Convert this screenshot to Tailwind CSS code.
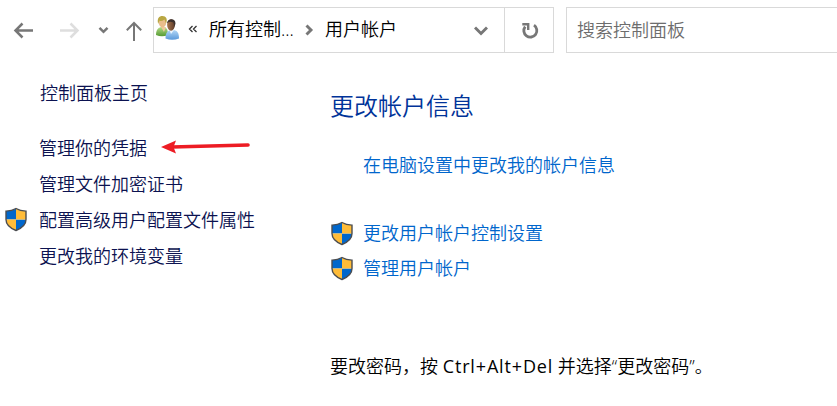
<!DOCTYPE html>
<html lang="zh-CN">
<head>
<meta charset="utf-8">
<title>用户帐户</title>
<script src="https://cdn.jsdelivr.net/npm/@tailwindcss/browser@4"></script>
</head>
<body class="bg-white w-[837px] h-[406px] overflow-hidden font-['Open_Sans','Noto_Sans_CJK_SC',sans-serif] text-[18px] font-[350] text-black whitespace-nowrap">
<svg class="absolute w-0 h-0">
  <clipPath id="sc"><path d="M12 1.500C9 3.400 5.500 4.100 2 4.100V12.500C2 18 6.500 21.300 12 23.500C17.500 21.300 22 18 22 12.500V4.100C18.500 4.100 15 3.400 12 1.500Z"/></clipPath>
  <symbol id="shield" viewBox="0 0 24 25">
    <g clip-path="url(#sc)"><path fill="#0067cc" d="M0 0H12V12.500H0ZM12 12.500H24V25H12Z"/><path fill="#ffbc38" d="M12 0H24V12.500H12ZM0 12.500H12V25H0Z"/></g>
    <path d="M12 1.500C9 3.400 5.500 4.100 2 4.100V12.500C2 18 6.500 21.300 12 23.500C17.500 21.300 22 18 22 12.500V4.100C18.500 4.100 15 3.400 12 1.500Z" fill="none" stroke="#4b4d50" stroke-width="1.400"/>
  </symbol>
</svg>
<header class="flex h-[60px] pt-[7px]">
  <nav class="w-[153px] h-[46px] shrink-0">
    <svg width="153" height="46" viewBox="0 7 153 46" fill="none" stroke="#777" stroke-width="2.500">
      <path d="M33 30.500H15.500M22.500 23.500L15.500 30.500L22.500 37.500"/>
      <path stroke="#dedede" d="M60 30.500H77.500M70.500 23.500L77.500 30.500L70.500 37.500"/>
      <path d="M99.500 27.800L103.500 31.800L107.500 27.800"/>
      <path stroke-width="2" d="M134 41V23M126.800 30.200L134 23L141.200 30.200"/>
    </svg>
  </nav>
  <div class="flex w-[401px] h-[46px] border border-[#d9d9d9] shrink-0">
    <div class="flex items-center w-[350px]">
      <svg class="ml-px mb-1 shrink-0" width="26" height="26" viewBox="0 0 26 26">
        <defs>
          <linearGradient id="gg" x2="0" y2="1"><stop stop-color="#b5dc8a"/><stop offset="1" stop-color="#559a32"/></linearGradient>
          <linearGradient id="bg" x2="0" y2="1"><stop stop-color="#b4d8f6"/><stop offset="1" stop-color="#5a98da"/></linearGradient>
          <linearGradient id="dg"><stop stop-color="#a8754e"/><stop offset="1" stop-color="#5d3b28"/></linearGradient>
        </defs>
        <path d="M1 20C1 14.500 3.500 12 7.500 12S13 14 13 20Q7 22.500 1 20Z" fill="url(#gg)"/>
        <path d="M6 12L9 17L11 12Z" fill="#efc99c"/>
        <ellipse cx="7.500" cy="7.500" rx="3.700" ry="5" fill="#e9bd8b"/>
        <path d="M3.200 9C1.700 3.500 4 1 7.500 1S13 4 11 8.500L9.500 4.500Q6 7 4.500 5.500Z" fill="#b9a743"/>
        <path d="M10.500 23.500C10.500 17 13 15 17.500 15S24 17.500 24 23.500Q17 26 10.500 23.500Z" fill="url(#bg)"/>
        <path d="M14.500 15L16 19L19 15Z" fill="#edf6ff"/>
        <ellipse cx="16" cy="10" rx="3.900" ry="5.700" fill="url(#dg)"/>
        <path d="M12 8.500C12 3.500 20.500 2.500 20.500 8.500L19.500 12L18.500 7.500Q14 5.500 12 8.500Z" fill="#3c302c"/>
      </svg>
      <svg class="ml-[7px] mb-[2px] shrink-0" width="10" height="8" viewBox="0 0 10 8" fill="none" stroke="#333" stroke-width="1.300"><path d="M4.500 1L1.500 4L4.500 7M8.500 1L5.500 4L8.500 7"/></svg>
      <span class="ml-[11px] mb-px w-[88px]">所有控制...</span>
      <svg class="ml-[8px] shrink-0" width="9" height="12" viewBox="0 0 9 12" fill="none" stroke="#777" stroke-width="2.900"><path d="M1.500 1.500L6 6L1.500 10.500"/></svg>
      <span class="ml-[11px] mb-px w-[72px]">用户帐户</span>
      <svg class="ml-[77px] mt-[2px] shrink-0" width="14" height="10" viewBox="0 0 14 10" fill="none" stroke="#777" stroke-width="2.900"><path d="M1 1.500L7 7.500L13 1.500"/></svg>
    </div>
    <div class="flex items-center justify-center flex-1 border-l border-[#d9d9d9]">
      <svg class="ml-px mt-px" width="18" height="18" viewBox="0 0 18 18" fill="none" stroke="#777" stroke-width="2.800"><path d="M13 3.200A6.500 6.500 0 1 1 4.200 4.600"/><path stroke-width="2.400" d="M1.300 2.200H7.200V8"/></svg>
    </div>
  </div>
  <div class="flex items-center ml-3 w-[280px] h-[46px] pl-[10px] border border-[#d9d9d9] text-[#6d6d6d] shrink-0">搜索控制面板</div>
</header>
<div class="flex relative">
  <aside class="w-[330px] shrink-0 pt-[15px] pl-[39px] leading-9 text-[#0b1250]">
    <div class="pl-px">控制面板主页</div>
    <ul class="mt-[19px]">
      <li>管理你的凭据</li>
      <li>管理文件加密证书</li>
      <li class="flex items-center -ml-[35px]"><svg class="mr-[11px] mb-px" width="24" height="25"><use href="#shield"/></svg>配置高级用户配置文件属性</li>
      <li>更改我的环境变量</li>
    </ul>
  </aside>
  <main class="pt-7 text-[#0066cc]">
    <h1 class="text-[24px] leading-9 text-[#003399]">更改帐户信息</h1>
    <div class="mt-[23px] ml-[33px] leading-9">在电脑设置中更改我的帐户信息</div>
    <div class="mt-[33px] h-[35px] flex items-center"><svg class="mr-[9px] mb-px" width="24" height="25"><use href="#shield"/></svg>更改用户帐户控制设置</div>
    <div class="h-[35px] flex items-center"><svg class="mr-[9px] mb-px" width="24" height="25"><use href="#shield"/></svg>管理用户帐户</div>
    <p class="mt-[62px] leading-9 text-black">要改密码，按 <span class="font-normal tracking-[0.85px]">Ctrl+Alt+Del</span> 并选择“更改密码”。</p>
  </main>
  <svg class="absolute left-[160px] top-[78px]" width="92" height="22" viewBox="160 138 92 22"><path d="M172 147L248 145" stroke="#ed1c24" stroke-width="3.600" stroke-linecap="round"/><path d="M161 147L176 140.500L173.500 147L176 153.500Z" fill="#ed1c24"/></svg>
</div>
</body>
</html>
